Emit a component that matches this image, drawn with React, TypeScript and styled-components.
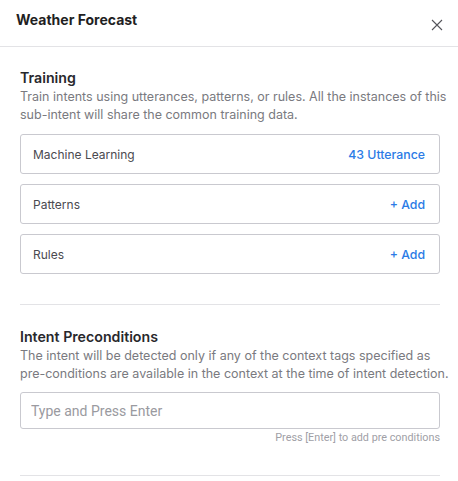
import styled, { createGlobalStyle } from "styled-components";

const GlobalStyle = createGlobalStyle`
  html, body {
    margin: 0;
    padding: 0;
    background: #ffffff;
  }
  body {
    font-family: Inter, "Noto Sans", sans-serif;
    -webkit-font-smoothing: antialiased;
  }
  * {
    box-sizing: border-box;
  }
`;

const Panel = styled.div`
  width: 458px;
  height: 481px;
  background: #fff;
  overflow: hidden;
`;

const Header = styled.div`
  height: 47px;
  display: flex;
  justify-content: space-between;
  align-items: flex-start;
  padding: 11px 15px 0 16px;
  border-bottom: 1px solid #e3e3e6;
`;

const PanelTitle = styled.h1`
  margin: 0;
  font-size: 14px;
  line-height: 18px;
  font-weight: 700;
  color: #1f1f23;
`;

const CloseButton = styled.button`
  margin-top: 7px;
  width: 13px;
  height: 13px;
  padding: 0;
  border: none;
  background: none;
  cursor: pointer;
  display: flex;
  align-items: center;
  justify-content: center;
`;

const Body = styled.div`
  padding: 21px 18px 0 20px;
`;

const Section = styled.section<{ $top?: number }>`
  margin-top: ${({ $top }) => $top ?? 0}px;
`;

const SectionTitle = styled.h2`
  margin: 0;
  font-size: 14.2px;
  line-height: 20px;
  font-weight: 600;
  color: #28282c;
`;

const SectionText = styled.p`
  margin: 0 -14px 0 0;
  font-size: 12.5px;
  line-height: 18px;
  color: #7a7a80;
`;

const CardList = styled.div`
  margin-top: 10px;
  display: flex;
  flex-direction: column;
  gap: 10px;
`;

const Card = styled.div`
  height: 40px;
  display: flex;
  align-items: center;
  justify-content: space-between;
  padding: 0 14px 0 12px;
  border: 1px solid #c9c9cf;
  border-radius: 3px;
`;

const CardLabel = styled.span`
  font-size: 12px;
  color: #4a4a50;
`;

const CardAction = styled.span`
  font-size: 12.3px;
  color: #2b7be6;
  font-weight: 500;
  cursor: pointer;
`;

const Divider = styled.hr<{ $top: number }>`
  margin: ${({ $top }) => $top}px 0 0 0;
  border: none;
  border-top: 1px solid #e3e3e6;
  height: 0;
`;

const Input = styled.input`
  margin-top: 9px;
  width: 100%;
  height: 37px;
  padding: 0 10px;
  border: 1px solid #c9c9cf;
  border-radius: 3px;
  font-family: Roboto, "Liberation Sans", sans-serif;
  font-size: 14px;
  color: #333;
  outline: none;
  &::placeholder {
    color: #9a9aa0;
  }
`;

const Hint = styled.div`
  margin-top: 2px;
  text-align: right;
  font-family: Roboto, "Liberation Sans", sans-serif;
  font-size: 10.8px;
  line-height: 14px;
  color: #a0a0a6;
`;

const CloseIcon = () => (
  <svg width="12" height="12" viewBox="0 0 12 12">
    <path d="M1 1 L11 11 M11 1 L1 11" stroke="#55555b" strokeWidth="1.1" />
  </svg>
);

const trainingItems = [
  { label: "Machine Learning", action: "43 Utterance" },
  { label: "Patterns", action: "+ Add" },
  { label: "Rules", action: "+ Add" },
];

export default function App() {
  return (
    <>
      <GlobalStyle />
      <Panel>
        <Header>
          <PanelTitle>Weather Forecast</PanelTitle>
          <CloseButton aria-label="Close">
            <CloseIcon />
          </CloseButton>
        </Header>
        <Body>
          <Section>
            <SectionTitle>Training</SectionTitle>
            <SectionText>
              Train intents using utterances, patterns, or rules. All the instances of this
              sub-intent will share the common training data.
            </SectionText>
            <CardList>
              {trainingItems.map((item) => (
                <Card key={item.label}>
                  <CardLabel>{item.label}</CardLabel>
                  <CardAction>{item.action}</CardAction>
                </Card>
              ))}
            </CardList>
          </Section>
          <Divider $top={30} />
          <Section $top={22}>
            <SectionTitle>Intent Preconditions</SectionTitle>
            <SectionText>
              The intent will be detected only if any of the context tags specified as
              pre-conditions are available in the context at the time of intent detection.
            </SectionText>
            <Input placeholder="Type and Press Enter" />
            <Hint>Press [Enter] to add pre conditions</Hint>
          </Section>
          <Divider $top={30} />
        </Body>
      </Panel>
    </>
  );
}
